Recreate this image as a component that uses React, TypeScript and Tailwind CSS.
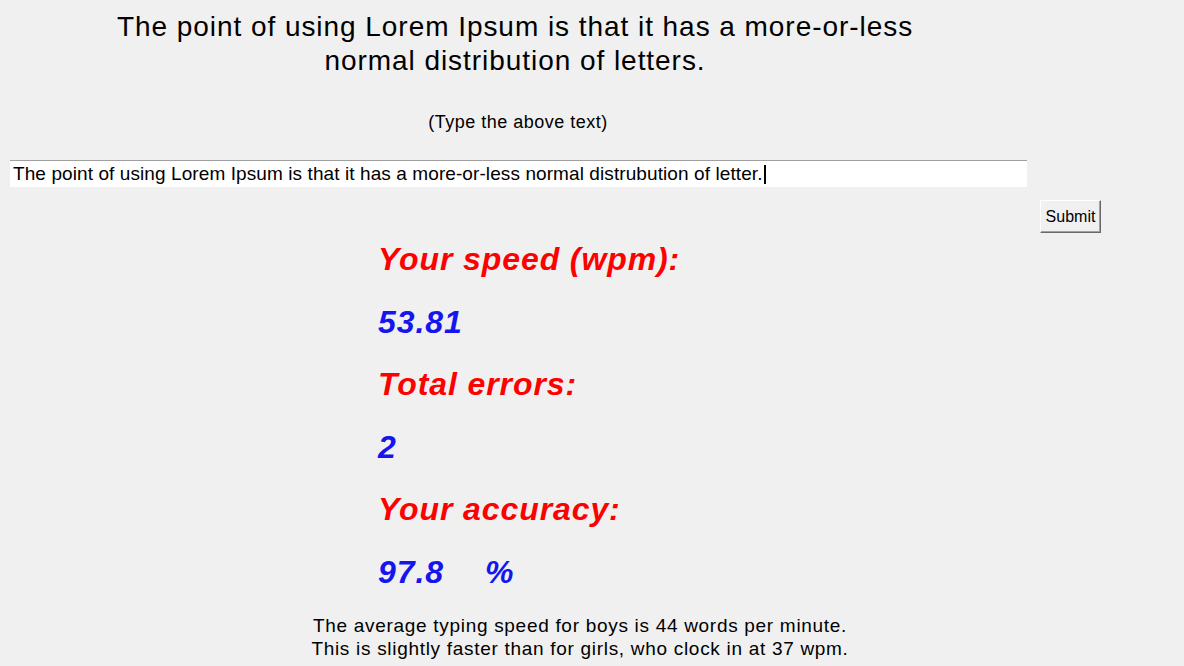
import React from "react";

export default function App() {
  return (
    <div className="w-[1184px] h-[666px] overflow-hidden bg-[#f0f0f0] text-black" style={{ fontFamily: '"Liberation Sans", Arial, sans-serif' }}>
      <div className="w-[1030px] flex flex-col items-center">
        <div className="mt-[10px] text-[28px] leading-[34px] text-center tracking-[0.95px] whitespace-nowrap">
          <div>The point of using Lorem Ipsum is that it has a more-or-less</div>
          <div>normal distribution of letters.</div>
        </div>
        <div className="mt-[33px] ml-[6px] text-[18px] leading-[22px] tracking-[0.5px]">(Type the above text)</div>
      </div>
      <div className="mt-[27px] ml-[10px] w-[1017px] h-[27px] bg-white border-t border-[#a0a0a0] flex items-center pl-[3px] text-[19px] tracking-[0.09px] whitespace-nowrap">
        The point of using Lorem Ipsum is that it has a more-or-less normal distrubution of letter.
        <span className="inline-block w-[2px] h-[19px] bg-black ml-[1px]"></span>
      </div>
      <div className="flex justify-end pr-[83px] mt-[13px]">
        <div className="w-[61px] h-[33px] bg-[#f0f0f0] border border-t-[#ffffff] border-l-[#ffffff] border-r-[#696969] border-b-[#696969] shadow-[inset_-1px_-1px_0_#a0a0a0] flex items-center justify-center text-[16px] tracking-[0px]">
          Submit
        </div>
      </div>
      <div className="ml-[378px] -mt-[5px] flex flex-col italic font-bold text-[32px] leading-[62.6px] tracking-[0.9px]">
        <div className="text-[#ff0000]">Your speed (wpm):</div>
        <div className="text-[#1515f0]">53.81</div>
        <div className="text-[#ff0000]">Total errors:</div>
        <div className="text-[#1515f0]">2</div>
        <div className="text-[#ff0000]">Your accuracy:</div>
        <div className="text-[#1515f0] flex gap-[41px]"><span>97.8</span><span>%</span></div>
      </div>
      <div className="w-[1160px] flex flex-col items-center mt-[10px] text-[19px] leading-[23px] tracking-[0.7px] whitespace-nowrap">
        <div>The average typing speed for boys is 44 words per minute.</div>
        <div>This is slightly faster than for girls, who clock in at 37 wpm.</div>
      </div>
    </div>
  );
}
